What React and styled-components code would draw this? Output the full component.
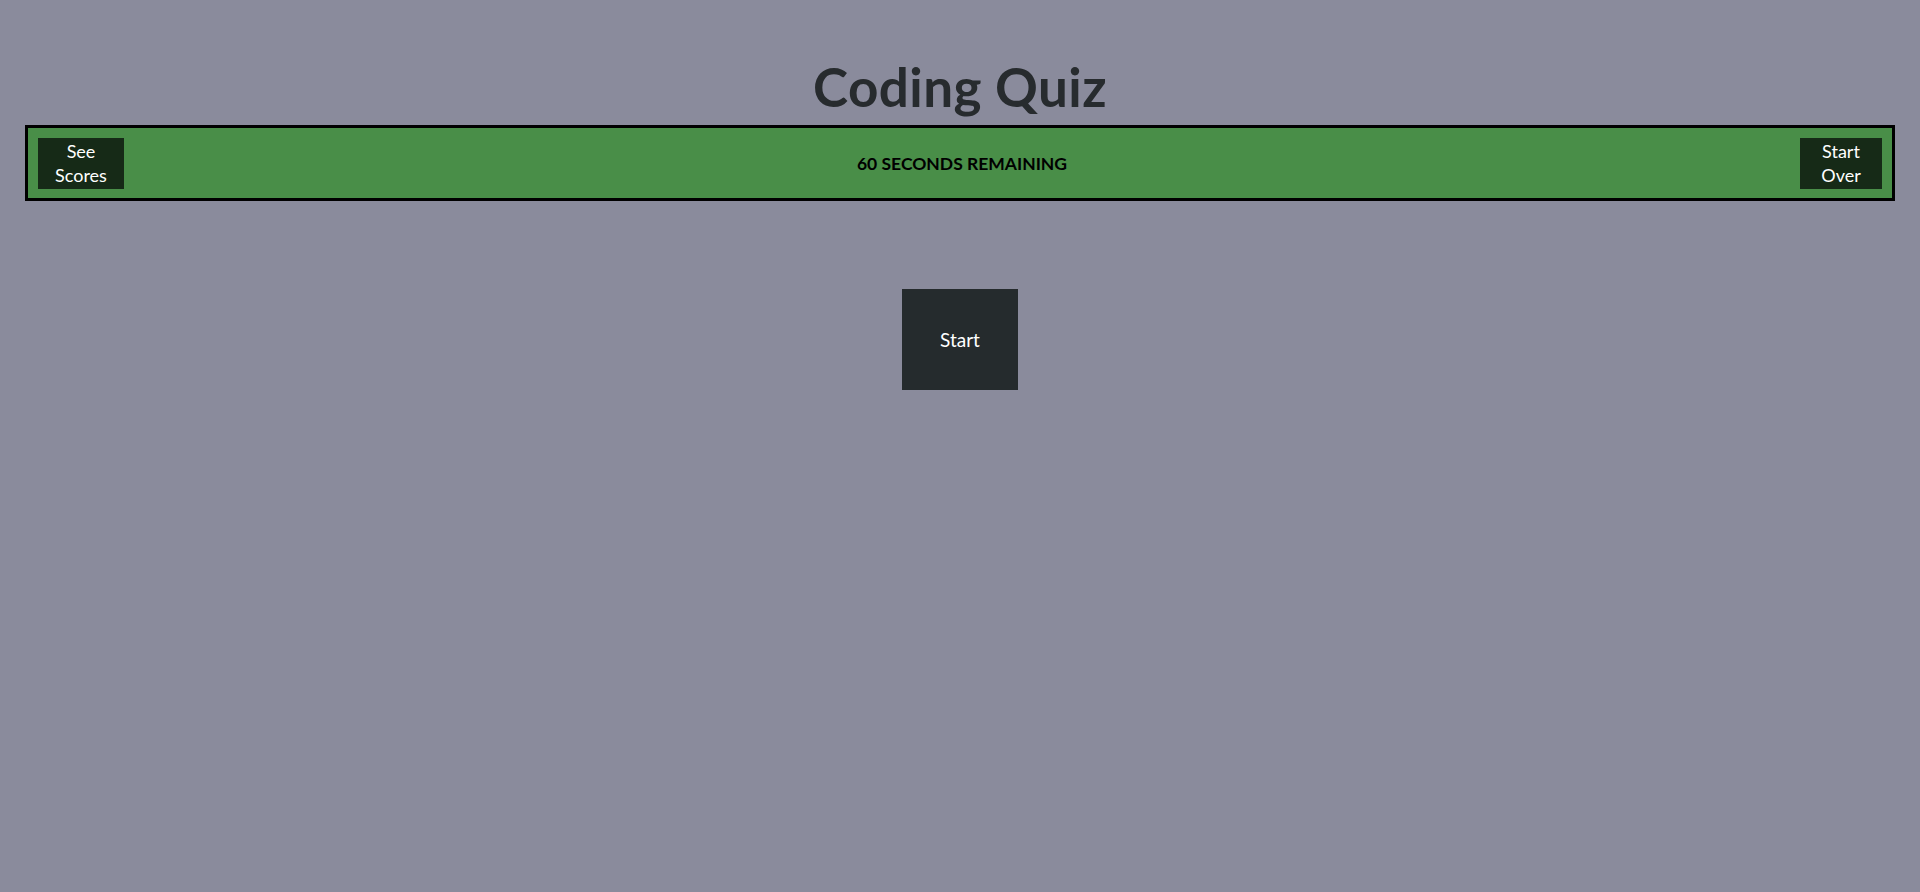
import React from "react";
import styled, { createGlobalStyle } from "styled-components";

const Global = createGlobalStyle`
  html, body {
    margin: 0;
    padding: 0;
    background: #8a8b9c;
    font-family: Lato, "Open Sans", sans-serif;
  }
`;

const Page = styled.div`
  min-height: 892px;
  display: flex;
  flex-direction: column;
  align-items: center;
  padding: 0 25px;
  box-sizing: border-box;
`;

const Title = styled.h1`
  margin: 56px 0 7px;
  font-family: Lato, sans-serif;
  font-weight: 700;
  font-size: 53px;
  line-height: 62px;
  color: #272b2e;
  letter-spacing: 0.4px;
`;

const Bar = styled.header`
  align-self: stretch;
  height: 76px;
  box-sizing: border-box;
  border: 3px solid #000;
  background: #498e48;
  display: flex;
  align-items: center;
  justify-content: space-between;
  padding: 0 10px;
`;

const NavButton = styled.button`
  width: ${(p) => p.$w}px;
  height: 51px;
  background: #162a17;
  border: none;
  color: #fff;
  font-family: Lato, sans-serif;
  font-size: 18px;
  line-height: 24px;
  padding: 0 6px;
  text-align: center;
  cursor: pointer;
`;

const Timer = styled.div`
  font-family: Lato, sans-serif;
  font-weight: 700;
  font-size: 17.5px;
  color: #000;
  padding-top: 1px;
`;

const StartButton = styled.button`
  margin-top: 88px;
  width: 116px;
  height: 101px;
  background: #252b2d;
  border: none;
  color: #fff;
  font-family: Lato, sans-serif;
  font-size: 19px;
  cursor: pointer;
`;

export default function App() {
  return (
    <>
      <Global />
      <Page>
        <Title>Coding Quiz</Title>
        <Bar>
          <NavButton $w={86}>See<br />Scores</NavButton>
          <Timer>60 SECONDS REMAINING</Timer>
          <NavButton $w={82}>Start<br />Over</NavButton>
        </Bar>
        <StartButton>Start</StartButton>
      </Page>
    </>
  );
}
